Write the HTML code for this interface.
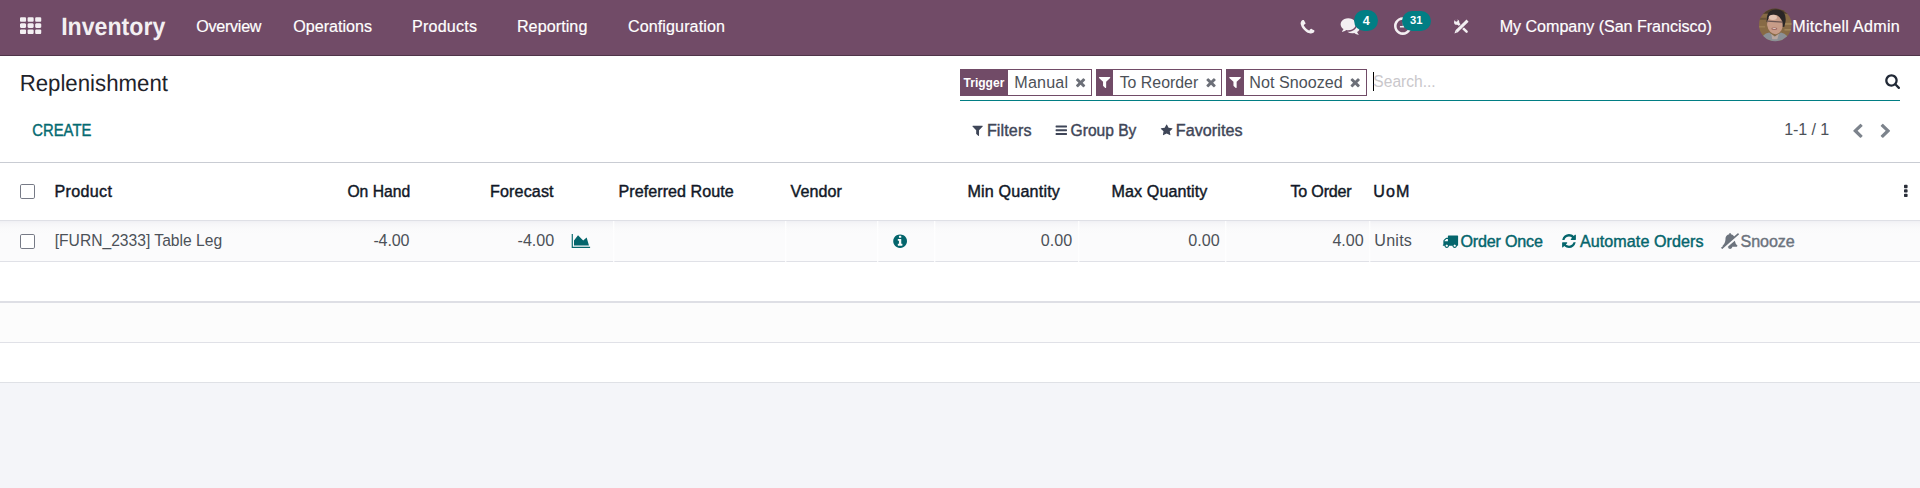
<!DOCTYPE html>
<html lang="en"><head><meta charset="utf-8"><title>Replenishment - Inventory</title>
<style>
html,body{margin:0;padding:0}
body{width:1920px;height:488px;position:relative;overflow:hidden;background:#f4f5f9;font-family:"Liberation Sans",Arial,sans-serif;}
.abs{position:absolute}
.t{position:absolute;white-space:nowrap;line-height:1;margin:0;padding:0;transform-origin:0 0}
.m{-webkit-text-stroke:0.42px currentColor}
.nv{-webkit-text-stroke:0.18px currentColor}
.g{text-rendering:geometricPrecision}
.b{font-weight:bold}
.ic{position:absolute;overflow:visible}
#nav{left:0;top:0;width:1920px;height:55px;background:#714b67;border-bottom:1px solid #4f3449}
#cp{left:0;top:56px;width:1920px;height:106px;background:#fff;border-bottom:1px solid #c9ccd3}
#thead{left:0;top:163px;width:1920px;height:57px;background:#fff}
#row1{left:0;top:220px;width:1920px;height:41px;background:linear-gradient(#dfe0e6 0,#dfe0e6 1px,#f0f0f4 1px,#f6f6f8 4px,#fafafb 9px,#fbfbfc 14px);border-bottom:1px solid #e0e1e7}
#row2{left:0;top:262px;width:1920px;height:39px;background:#fff;border-bottom:2px solid #dedfe5}
#row3{left:0;top:303px;width:1920px;height:39px;background:#fcfcfc;border-bottom:1px solid #e0e1e7}
#row4{left:0;top:343px;width:1920px;height:39px;background:#fff;border-bottom:1px solid #dfe1e6}
.vl{position:absolute;top:221px;height:41px;width:2px;background:linear-gradient(90deg,rgba(255,255,255,.85) 1px,rgba(255,255,255,.3) 1px)}
.cb{position:absolute;left:20px;width:13px;height:13px;border:1px solid #767a86;border-radius:1.8px;background:#fff}
.facet{position:absolute;top:69px;height:25px;border:1px solid #714b67;background:#fff}
.facet i{position:absolute;left:0;top:0;bottom:0;background:#714b67;display:block}
.badge{position:absolute;background:#017e84;border-radius:11px}
</style></head><body>
<nav class="o_main_navbar">
<div id="nav" class="abs"></div>
<svg class="ic" style="left:1758px;top:8px;width:35px;height:34px" viewBox="0 0 35 34"><defs><clipPath id="av"><circle cx="16" cy="16" r="16"/></clipPath><filter id="bl" x="-10%" y="-10%" width="120%" height="120%"><feGaussianBlur stdDeviation="0.7"/></filter></defs><g transform="translate(1.0,0.6) scale(1.01875)"><g clip-path="url(#av)"><rect width="32" height="32" fill="#876a45"/><g filter="url(#bl)"><rect x="-2" y="-2" width="36" height="7" fill="#4e3c2b"/><rect x="-2" y="9" width="9" height="2" fill="#6b5337"/><rect x="24" y="14" width="10" height="2" fill="#a08458"/><rect x="25" y="20" width="9" height="1.6" fill="#a08458"/><rect x="-2" y="17" width="8" height="1.6" fill="#9a7d52"/><path d="M7.5 13 Q7 1 17 1 Q27.5 1.5 26 13 L24.8 18 L9 15Z" fill="#2a2527"/><ellipse cx="15.6" cy="15.6" rx="7.6" ry="9.6" fill="#c79c88" transform="rotate(-8 15.6 15.6)"/><ellipse cx="13.6" cy="8.6" rx="4" ry="2.6" fill="#e2c3b3"/><path d="M8.3 11.6 L23.6 12.6 L23.5 13.8 L8.2 12.8Z" fill="#6a5552"/><ellipse cx="15" cy="19.8" rx="3" ry="1.3" fill="#a06a63"/><ellipse cx="15" cy="19.6" rx="1.8" ry="0.5" fill="#d9c9c2"/><path d="M1 33 Q3 24.5 10 23.5 L15.5 27.5 L21.5 23.5 Q29 25.5 30.5 33Z" fill="#8b9096"/><path d="M12 25 L15.5 27.6 L19.5 24.8 L18 30 L13 30Z" fill="#b9a79f"/></g></g></g></svg>
<svg class="ic" style="left:1453px;top:18px;width:17px;height:17px" viewBox="0 0 17 17"><g transform="translate(0.7,0.6) scale(0.96875)"><path d="M4.4 5 L13.3 13.5" stroke="#f3eff2" stroke-width="2.6" stroke-linecap="round" fill="none"/><circle cx="3.1" cy="3.7" r="2.7" fill="#f3eff2"/><circle cx="2.7" cy="1.8" r="1.35" fill="#714b67"/><path d="M3.4 12.7 L13.6 2.8" stroke="#714b67" stroke-width="4.8" fill="none"/><path d="M2.9 13.2 L14.3 2.1" stroke="#f3eff2" stroke-width="3" fill="none"/><path d="M0.8 15.3 L1.9 12.1 L4 14.2Z" fill="#f3eff2"/></g></svg>
<svg class="ic" style="left:19px;top:16px;width:24px;height:19px" viewBox="0 0 24 19"><path fill="#f3eff2" transform="translate(1.000,1.250) scale(0.011858,0.011896) translate(0.00,1408.00) scale(1,-1)" d="M512 288v-192q0 -40 -28 -68t-68 -28h-320q-40 0 -68 28t-28 68v192q0 40 28 68t68 28h320q40 0 68 -28t28 -68zM512 800v-192q0 -40 -28 -68t-68 -28h-320q-40 0 -68 28t-28 68v192q0 40 28 68t68 28h320q40 0 68 -28t28 -68zM1152 288v-192q0 -40 -28 -68t-68 -28h-320 q-40 0 -68 28t-28 68v192q0 40 28 68t68 28h320q40 0 68 -28t28 -68zM512 1312v-192q0 -40 -28 -68t-68 -28h-320q-40 0 -68 28t-28 68v192q0 40 28 68t68 28h320q40 0 68 -28t28 -68zM1152 800v-192q0 -40 -28 -68t-68 -28h-320q-40 0 -68 28t-28 68v192q0 40 28 68t68 28 h320q40 0 68 -28t28 -68zM1792 288v-192q0 -40 -28 -68t-68 -28h-320q-40 0 -68 28t-28 68v192q0 40 28 68t68 28h320q40 0 68 -28t28 -68zM1152 1312v-192q0 -40 -28 -68t-68 -28h-320q-40 0 -68 28t-28 68v192q0 40 28 68t68 28h320q40 0 68 -28t28 -68zM1792 800v-192 q0 -40 -28 -68t-68 -28h-320q-40 0 -68 28t-28 68v192q0 40 28 68t68 28h320q40 0 68 -28t28 -68zM1792 1312v-192q0 -40 -28 -68t-68 -28h-320q-40 0 -68 28t-28 68v192q0 40 28 68t68 28h320q40 0 68 -28t28 -68z"/></svg>
<svg class="ic" style="left:1299px;top:19px;width:17px;height:16px" viewBox="0 0 17 16"><path fill="#f3eff2" transform="translate(1.600,1.000) scale(0.009801,0.009659) translate(0.00,1408.00) scale(1,-1)" d="M1408 296q0 -27 -10 -70.5t-21 -68.5q-21 -50 -122 -106q-94 -51 -186 -51q-27 0 -53 3.5t-57.5 12.5t-47 14.5t-55.5 20.5t-49 18q-98 35 -175 83q-127 79 -264 216t-216 264q-48 77 -83 175q-3 9 -18 49t-20.5 55.5t-14.5 47t-12.5 57.5t-3.5 53q0 92 51 186 q56 101 106 122q25 11 68.5 21t70.5 10q14 0 21 -3q18 -6 53 -76q11 -19 30 -54t35 -63.5t31 -53.5q3 -4 17.5 -25t21.5 -35.5t7 -28.5q0 -20 -28.5 -50t-62 -55t-62 -53t-28.5 -46q0 -9 5 -22.5t8.5 -20.5t14 -24t11.5 -19q76 -137 174 -235t235 -174q2 -1 19 -11.5t24 -14 t20.5 -8.5t22.5 -5q18 0 46 28.5t53 62t55 62t50 28.5q14 0 28.5 -7t35.5 -21.5t25 -17.5q25 -15 53.5 -31t63.5 -35t54 -30q70 -35 76 -53q3 -7 3 -21z"/></svg>
<svg class="ic" style="left:1339px;top:17px;width:22px;height:19px" viewBox="0 0 22 19"><path fill="#f3eff2" transform="translate(1.600,1.300) scale(0.010826,0.011718) translate(0.00,1280.00) scale(1,-1)" d="M1408 768q0 -139 -94 -257t-256.5 -186.5t-353.5 -68.5q-86 0 -176 16q-124 -88 -278 -128q-36 -9 -86 -16h-3q-11 0 -20.5 8t-11.5 21q-1 3 -1 6.5t0.5 6.5t2 6l2.5 5t3.5 5.5t4 5t4.5 5t4 4.5q5 6 23 25t26 29.5t22.5 29t25 38.5t20.5 44q-124 72 -195 177t-71 224 q0 139 94 257t256.5 186.5t353.5 68.5t353.5 -68.5t256.5 -186.5t94 -257zM1792 512q0 -120 -71 -224.5t-195 -176.5q10 -24 20.5 -44t25 -38.5t22.5 -29t26 -29.5t23 -25q1 -1 4 -4.5t4.5 -5t4 -5t3.5 -5.5l2.5 -5t2 -6t0.5 -6.5t-1 -6.5q-3 -14 -13 -22t-22 -7 q-50 7 -86 16q-154 40 -278 128q-90 -16 -176 -16q-271 0 -472 132q58 -4 88 -4q161 0 309 45t264 129q125 92 192 212t67 254q0 77 -23 152q129 -71 204 -178t75 -230z"/></svg>
<svg class="ic" style="left:1393px;top:16px;width:20px;height:20px" viewBox="0 0 20 20"><path fill="#f3eff2" transform="translate(1.000,1.200) scale(0.011458,0.011523) translate(0.00,1408.00) scale(1,-1)" d="M896 992v-448q0 -14 -9 -23t-23 -9h-320q-14 0 -23 9t-9 23v64q0 14 9 23t23 9h224v352q0 14 9 23t23 9h64q14 0 23 -9t9 -23zM1312 640q0 148 -73 273t-198 198t-273 73t-273 -73t-198 -198t-73 -273t73 -273t198 -198t273 -73t273 73t198 198t73 273zM1536 640 q0 -209 -103 -385.5t-279.5 -279.5t-385.5 -103t-385.5 103t-279.5 279.5t-103 385.5t103 385.5t279.5 279.5t385.5 103t385.5 -103t279.5 -279.5t103 -385.5z"/></svg>
<div class="badge" style="left:1354px;top:10px;width:24px;height:21px"></div>
<div class="badge" style="left:1402px;top:10.5px;width:29px;height:20px"></div>
<span id="brand" class="t b g" style="left:61.00px;top:14.83px;font-size:25.00px;letter-spacing:0.000px;color:#f3eff2;transform:translateX(0.20px) scaleX(0.9246)">Inventory</span>
<span id="m1" class="t nv" style="left:196.26px;top:18.09px;font-size:16.12px;letter-spacing:-0.271px;color:#ffffff">Overview</span>
<span id="m2" class="t nv" style="left:293.26px;top:18.09px;font-size:16.12px;letter-spacing:-0.010px;color:#ffffff">Operations</span>
<span id="m3" class="t nv" style="left:412.10px;top:18.04px;font-size:16.12px;letter-spacing:0.182px;color:#ffffff">Products</span>
<span id="m4" class="t nv" style="left:516.88px;top:18.09px;font-size:16.12px;letter-spacing:0.080px;color:#ffffff">Reporting</span>
<span id="m5" class="t nv" style="left:627.90px;top:18.08px;font-size:16.12px;letter-spacing:0.102px;color:#ffffff">Configuration</span>
<span id="comp" class="t nv" style="left:1499.70px;top:18.11px;font-size:16.12px;letter-spacing:-0.037px;color:#ffffff">My Company (San Francisco)</span>
<span id="user" class="t nv" style="left:1792.23px;top:18.04px;font-size:16.12px;letter-spacing:0.285px;color:#ffffff">Mitchell Admin</span>
<span id="b1" class="t b" style="left:1362.87px;top:14.74px;font-size:12.50px;letter-spacing:0.000px;color:#ffffff">4</span>
<span id="b2" class="t b" style="left:1409.92px;top:15.05px;font-size:11.20px;letter-spacing:0.000px;color:#ffffff">31</span>
</nav>
<header class="o_control_panel">
<div id="cp" class="abs"></div>
<div class="facet" style="left:960px;width:130px"><i style="width:47px"></i></div>
<div class="facet" style="left:1096px;width:124px"><i style="width:16px"></i></div>
<div class="facet" style="left:1226px;width:139px"><i style="width:17px"></i></div>
<div class="abs" style="left:960px;top:100px;width:940px;height:1px;background:#017e84"></div>
<div class="abs" style="left:1373px;top:72px;width:1px;height:19px;background:#000"></div>
<svg class="ic" style="left:1075px;top:77px;width:12px;height:12px" viewBox="0 0 12 12"><path fill="#6c6f78" transform="translate(1.000,1.300) scale(0.007744,0.007492) translate(-110.00,1170.00) scale(1,-1)" d="M1298 214q0 -40 -28 -68l-136 -136q-28 -28 -68 -28t-68 28l-294 294l-294 -294q-28 -28 -68 -28t-68 28l-136 136q-28 28 -28 68t28 68l294 294l-294 294q-28 28 -28 68t28 68l136 136q28 28 68 28t68 -28l294 -294l294 294q28 28 68 28t68 -28l136 -136q28 -28 28 -68 t-28 -68l-294 -294l294 -294q28 -28 28 -68z"/></svg>
<svg class="ic" style="left:1205px;top:77px;width:12px;height:12px" viewBox="0 0 12 12"><path fill="#6c6f78" transform="translate(1.400,1.300) scale(0.007828,0.007492) translate(-110.00,1170.00) scale(1,-1)" d="M1298 214q0 -40 -28 -68l-136 -136q-28 -28 -68 -28t-68 28l-294 294l-294 -294q-28 -28 -68 -28t-68 28l-136 136q-28 28 -28 68t28 68l294 294l-294 294q-28 28 -28 68t28 68l136 136q28 28 68 28t68 -28l294 -294l294 294q28 28 68 28t68 -28l136 -136q28 -28 28 -68 t-28 -68l-294 -294l294 -294q28 -28 28 -68z"/></svg>
<svg class="ic" style="left:1349px;top:77px;width:12px;height:12px" viewBox="0 0 12 12"><path fill="#6c6f78" transform="translate(1.600,1.300) scale(0.007744,0.007492) translate(-110.00,1170.00) scale(1,-1)" d="M1298 214q0 -40 -28 -68l-136 -136q-28 -28 -68 -28t-68 28l-294 294l-294 -294q-28 -28 -68 -28t-68 28l-136 136q-28 28 -28 68t28 68l294 294l-294 294q-28 28 -28 68t28 68l136 136q28 28 68 28t68 -28l294 -294l294 294q28 28 68 28t68 -28l136 -136q28 -28 28 -68 t-28 -68l-294 -294l294 -294q28 -28 28 -68z"/></svg>
<svg class="ic" style="left:1097px;top:76px;width:15px;height:14px" viewBox="0 0 15 14"><path fill="#ffffff" transform="translate(1.900,1.100) scale(0.008085,0.007812) translate(1.02,1280.00) scale(1,-1)" d="M1403 1241q17 -41 -14 -70l-493 -493v-742q0 -42 -39 -59q-13 -5 -25 -5q-27 0 -45 19l-256 256q-19 19 -19 45v486l-493 493q-31 29 -14 70q17 39 59 39h1280q42 0 59 -39z"/></svg>
<svg class="ic" style="left:1228px;top:76px;width:14px;height:14px" viewBox="0 0 14 14"><path fill="#ffffff" transform="translate(1.200,1.100) scale(0.008298,0.007812) translate(1.02,1280.00) scale(1,-1)" d="M1403 1241q17 -41 -14 -70l-493 -493v-742q0 -42 -39 -59q-13 -5 -25 -5q-27 0 -45 19l-256 256q-19 19 -19 45v486l-493 493q-31 29 -14 70q17 39 59 39h1280q42 0 59 -39z"/></svg>
<svg class="ic" style="left:971px;top:124px;width:13px;height:13px" viewBox="0 0 13 13"><path fill="#3f4658" transform="translate(1.400,1.800) scale(0.007376,0.007244) translate(1.02,1280.00) scale(1,-1)" d="M1403 1241q17 -41 -14 -70l-493 -493v-742q0 -42 -39 -59q-13 -5 -25 -5q-27 0 -45 19l-256 256q-19 19 -19 45v486l-493 493q-31 29 -14 70q17 39 59 39h1280q42 0 59 -39z"/></svg>
<svg class="ic" style="left:1054px;top:124px;width:14px;height:12px" viewBox="0 0 14 12"><path fill="#3f4658" transform="translate(1.600,1.600) scale(0.007422,0.007344) translate(0.00,1280.00) scale(1,-1)" d="M1536 192v-128q0 -26 -19 -45t-45 -19h-1408q-26 0 -45 19t-19 45v128q0 26 19 45t45 19h1408q26 0 45 -19t19 -45zM1536 704v-128q0 -26 -19 -45t-45 -19h-1408q-26 0 -45 19t-19 45v128q0 26 19 45t45 19h1408q26 0 45 -19t19 -45zM1536 1216v-128q0 -26 -19 -45 t-45 -19h-1408q-26 0 -45 19t-19 45v128q0 26 19 45t45 19h1408q26 0 45 -19t19 -45z"/></svg>
<svg class="ic" style="left:1159px;top:123px;width:15px;height:14px" viewBox="0 0 15 14"><path fill="#3f4658" transform="translate(1.800,1.400) scale(0.007031,0.006805) translate(0.00,1504.00) scale(1,-1)" d="M1664 889q0 -22 -26 -48l-363 -354l86 -500q1 -7 1 -20q0 -21 -10.5 -35.5t-30.5 -14.5q-19 0 -40 12l-449 236l-449 -236q-22 -12 -40 -12q-21 0 -31.5 14.5t-10.5 35.5q0 6 2 20l86 500l-364 354q-25 27 -25 48q0 37 56 46l502 73l225 455q19 41 49 41t49 -41l225 -455 l502 -73q56 -9 56 -46z"/></svg>
<svg class="ic" style="left:1884px;top:73px;width:17px;height:17px" viewBox="0 0 17 17"><path fill="#212936" transform="translate(1.200,1.200) scale(0.008894,0.008894) translate(0.00,1408.00) scale(1,-1)" d="M1152 704q0 185 -131.5 316.5t-316.5 131.5t-316.5 -131.5t-131.5 -316.5t131.5 -316.5t316.5 -131.5t316.5 131.5t131.5 316.5zM1664 -128q0 -52 -38 -90t-90 -38q-54 0 -90 38l-343 342q-179 -124 -399 -124q-143 0 -273.5 55.5t-225 150t-150 225t-55.5 273.5 t55.5 273.5t150 225t225 150t273.5 55.5t273.5 -55.5t225 -150t150 -225t55.5 -273.5q0 -220 -124 -399l343 -343q37 -37 37 -90z"/></svg>
<svg class="ic" style="left:1852px;top:122px;width:12px;height:17px" viewBox="0 0 12 17"><path fill="#7c838c" transform="translate(1.200,1.800) scale(0.009073,0.008685) translate(-154.00,1510.00) scale(1,-1)" d="M1171 1235l-531 -531l531 -531q19 -19 19 -45t-19 -45l-166 -166q-19 -19 -45 -19t-45 19l-742 742q-19 19 -19 45t19 45l742 742q19 19 45 19t45 -19l166 -166q19 -19 19 -45t-19 -45z"/></svg>
<svg class="ic" style="left:1879px;top:122px;width:13px;height:17px" viewBox="0 0 13 17"><path fill="#7c838c" transform="translate(1.700,1.800) scale(0.009073,0.008685) translate(-90.00,1510.00) scale(1,-1)" d="M1107 659l-742 -742q-19 -19 -45 -19t-45 19l-166 166q-19 19 -19 45t19 45l531 531l-531 531q-19 19 -19 45t19 45l166 166q19 19 45 19t45 -19l742 -742q19 -19 19 -45t-19 -45z"/></svg>
<span id="title" class="t g" style="left:19.00px;top:71.58px;font-size:23.26px;letter-spacing:0.000px;color:#1f232b;transform:translateX(0.63px) scaleX(0.9563)">Replenishment</span>
<span id="create" class="t m" style="left:32.00px;top:122.07px;font-size:16.12px;letter-spacing:0.000px;color:#046a71;transform:translateX(0.36px) scaleX(0.9188)">CREATE</span>
<span id="f1l" class="t b" style="left:963.00px;top:77.48px;font-size:12.90px;letter-spacing:0.000px;color:#ffffff;transform:translateX(0.58px) scaleX(0.9327)">Trigger</span>
<span id="f1" class="t" style="left:1014.36px;top:74.10px;font-size:16.12px;letter-spacing:0.178px;color:#4c5158">Manual</span>
<span id="f2" class="t" style="left:1119.00px;top:74.06px;font-size:16.12px;letter-spacing:0.000px;color:#4c5158;transform:translateX(0.66px) scaleX(0.9854)">To Reorder</span>
<span id="f3" class="t" style="left:1249.36px;top:74.10px;font-size:16.12px;letter-spacing:0.018px;color:#4c5158">Not Snoozed</span>
<span id="srch" class="t" style="left:1373.00px;top:73.07px;font-size:16.12px;letter-spacing:0.000px;color:#c9c7cb;transform:translateX(0.34px) scaleX(0.9671)">Search...</span>
<span id="fl" class="t m" style="left:986.91px;top:122.04px;font-size:16.12px;letter-spacing:0.121px;color:#3f4658">Filters</span>
<span id="gb" class="t m" style="left:1070.00px;top:122.07px;font-size:16.12px;letter-spacing:0.000px;color:#3f4658;transform:translateX(0.59px) scaleX(0.9664)">Group By</span>
<span id="fav" class="t m" style="left:1175.74px;top:121.98px;font-size:16.12px;letter-spacing:0.075px;color:#3f4658">Favorites</span>
<span id="pg" class="t" style="left:1784.31px;top:121.10px;font-size:16.12px;letter-spacing:-0.132px;color:#4c5158">1-1 / 1</span>
</header>
<main class="o_list_view">
<div id="thead" class="abs"></div>
<div id="row1" class="abs"></div>
<div id="row2" class="abs"></div>
<div id="row3" class="abs"></div>
<div id="row4" class="abs"></div>
<div class="vl" style="left:613px"></div>
<div class="vl" style="left:785px"></div>
<div class="vl" style="left:877px"></div>
<div class="vl" style="left:934px"></div>
<div class="vl" style="left:1078px"></div>
<div class="vl" style="left:1225px"></div>
<div class="vl" style="left:1369px"></div>
<div class="cb" style="top:184px"></div><div class="cb" style="top:234px"></div>
<svg class="ic" style="left:570px;top:233px;width:22px;height:16px" viewBox="0 0 22 16"><path fill="#04656c" transform="translate(1.700,1.100) scale(0.008984,0.008984) translate(0.00,1408.00) scale(1,-1)" d="M2048 0v-128h-2048v1536h128v-1408h1920zM1664 1024l256 -896h-1664v576l448 576l576 -576z"/></svg>
<svg class="ic" style="left:892px;top:233px;width:16px;height:16px" viewBox="0 0 16 16"><path fill="#04656c" transform="translate(1.200,1.400) scale(0.008984,0.008789) translate(0.00,1408.00) scale(1,-1)" d="M1024 160v160q0 14 -9 23t-23 9h-96v512q0 14 -9 23t-23 9h-320q-14 0 -23 -9t-9 -23v-160q0 -14 9 -23t23 -9h96v-320h-96q-14 0 -23 -9t-9 -23v-160q0 -14 9 -23t23 -9h448q14 0 23 9t9 23zM896 1056v160q0 14 -9 23t-23 9h-192q-14 0 -23 -9t-9 -23v-160q0 -14 9 -23 t23 -9h192q14 0 23 9t9 23zM1536 640q0 -209 -103 -385.5t-279.5 -279.5t-385.5 -103t-385.5 103t-279.5 279.5t-103 385.5t103 385.5t279.5 279.5t385.5 103t385.5 -103t279.5 -279.5t103 -385.5z"/></svg>
<svg class="ic" style="left:1441px;top:234px;width:19px;height:15px" viewBox="0 0 19 15"><path fill="#04656c" transform="translate(1.800,1.500) scale(0.008854,0.008878) translate(-64.00,1280.00) scale(1,-1)" d="M640 128q0 52 -38 90t-90 38t-90 -38t-38 -90t38 -90t90 -38t90 38t38 90zM256 640h384v256h-158q-13 0 -22 -9l-195 -195q-9 -9 -9 -22v-30zM1536 128q0 52 -38 90t-90 38t-90 -38t-38 -90t38 -90t90 -38t90 38t38 90zM1792 1216v-1024q0 -15 -4 -26.5t-13.5 -18.5 t-16.5 -11.5t-23.5 -6t-22.5 -2t-25.5 0t-22.5 0.5q0 -106 -75 -181t-181 -75t-181 75t-75 181h-384q0 -106 -75 -181t-181 -75t-181 75t-75 181h-64q-3 0 -22.5 -0.5t-25.5 0t-22.5 2t-23.5 6t-16.5 11.5t-13.5 18.5t-4 26.5q0 26 19 45t45 19v320q0 8 -0.5 35t0 38 t2.5 34.5t6.5 37t14 30.5t22.5 30l198 198q19 19 50.5 32t58.5 13h160v192q0 26 19 45t45 19h1024q26 0 45 -19t19 -45z"/></svg>
<svg class="ic" style="left:1561px;top:233px;width:16px;height:16px" viewBox="0 0 16 16"><path fill="#04656c" transform="translate(1.100,1.100) scale(0.008984,0.009049) translate(0.00,1408.00) scale(1,-1)" d="M1511 480q0 -5 -1 -7q-64 -268 -268 -434.5t-478 -166.5q-146 0 -282.5 55t-243.5 157l-129 -129q-19 -19 -45 -19t-45 19t-19 45v448q0 26 19 45t45 19h448q26 0 45 -19t19 -45t-19 -45l-137 -137q71 -66 161 -102t187 -36q134 0 250 65t186 179q11 17 53 117 q8 23 30 23h192q13 0 22.5 -9.5t9.5 -22.5zM1536 1280v-448q0 -26 -19 -45t-45 -19h-448q-26 0 -45 19t-19 45t19 45l138 138q-148 137 -349 137q-134 0 -250 -65t-186 -179q-11 -17 -53 -117q-8 -23 -30 -23h-199q-13 0 -22.5 9.5t-9.5 22.5v7q65 268 270 434.5t480 166.5 q146 0 284 -55.5t245 -156.5l130 129q19 19 45 19t45 -19t19 -45z"/></svg>
<svg class="ic" style="left:1720px;top:232px;width:20px;height:18px" viewBox="0 0 20 18"><path fill="#6c737d" transform="translate(1.100,1.100) scale(0.008866,0.008873) translate(-14.47,1536.00) scale(1,-1)" d="M1558 684q61 -356 298 -556q0 -52 -38 -90t-90 -38h-448q0 -106 -75 -181t-181 -75t-180.5 74.5t-75.5 180.5zM1024 -176q16 0 16 16t-16 16q-59 0 -101.5 42.5t-42.5 101.5q0 16 -16 16t-16 -16q0 -73 51.5 -124.5t124.5 -51.5zM2026 1424q8 -10 7.5 -23.5t-10.5 -22.5 l-1872 -1622q-10 -8 -23.5 -7t-21.5 11l-84 96q-8 10 -7.5 23.5t10.5 21.5l186 161q-19 32 -19 66q50 42 91 88t85 119.5t74.5 158.5t50 206t19.5 260q0 152 117 282.5t307 158.5q-8 19 -8 39q0 40 28 68t68 28t68 -28t28 -68q0 -20 -8 -39q124 -18 219 -82.5t148 -157.5 l418 363q10 8 23.5 7t21.5 -11z"/></svg>
<svg class="ic" style="left:1903px;top:183px;width:6px;height:15px" viewBox="0 0 6 15"><path fill="#2b2f3a" transform="translate(1.000,1.800) scale(0.009375,0.008665) translate(0.00,1408.00) scale(1,-1)" d="M384 288v-192q0 -40 -28 -68t-68 -28h-192q-40 0 -68 28t-28 68v192q0 40 28 68t68 28h192q40 0 68 -28t28 -68zM384 800v-192q0 -40 -28 -68t-68 -28h-192q-40 0 -68 28t-28 68v192q0 40 28 68t68 28h192q40 0 68 -28t28 -68zM384 1312v-192q0 -40 -28 -68t-68 -28h-192 q-40 0 -68 28t-28 68v192q0 40 28 68t68 28h192q40 0 68 -28t28 -68z"/></svg>
<span id="h1" class="t m" style="left:54.48px;top:183.09px;font-size:16.12px;letter-spacing:0.320px;color:#111827">Product</span>
<span id="h2" class="t m" style="left:347.00px;top:183.06px;font-size:16.12px;letter-spacing:0.000px;color:#111827;transform:translateX(0.38px) scaleX(0.9729)">On Hand</span>
<span id="h3" class="t m" style="left:490.07px;top:183.08px;font-size:16.12px;letter-spacing:0.122px;color:#111827">Forecast</span>
<span id="h4" class="t m" style="left:618.59px;top:183.23px;font-size:16.12px;letter-spacing:0.034px;color:#111827">Preferred Route</span>
<span id="h5" class="t m" style="left:790.48px;top:183.07px;font-size:16.12px;letter-spacing:0.087px;color:#111827">Vendor</span>
<span id="h6" class="t m" style="left:967.48px;top:183.09px;font-size:16.12px;letter-spacing:0.177px;color:#111827">Min Quantity</span>
<span id="h7" class="t m" style="left:1111.59px;top:183.23px;font-size:16.12px;letter-spacing:0.075px;color:#111827">Max Quantity</span>
<span id="h8" class="t m" style="left:1290.39px;top:183.23px;font-size:16.12px;letter-spacing:-0.190px;color:#111827">To Order</span>
<span id="h9" class="t m" style="left:1373.31px;top:183.13px;font-size:16.12px;letter-spacing:1.049px;color:#111827">UoM</span>
<span id="r1" class="t" style="left:54.00px;top:232.04px;font-size:16.12px;letter-spacing:0.000px;color:#4c5158;transform:translateX(0.71px) scaleX(0.9703)">[FURN_2333] Table Leg</span>
<span id="r2" class="t" style="left:373.39px;top:232.10px;font-size:16.12px;letter-spacing:-0.128px;color:#4c5158">-4.00</span>
<span id="r3" class="t" style="left:517.57px;top:232.23px;font-size:16.12px;letter-spacing:-0.046px;color:#4c5158">-4.00</span>
<span id="r4" class="t" style="left:1040.75px;top:231.99px;font-size:16.12px;letter-spacing:0.061px;color:#4c5158">0.00</span>
<span id="r5" class="t" style="left:1188.34px;top:232.18px;font-size:16.12px;letter-spacing:-0.018px;color:#4c5158">0.00</span>
<span id="r6" class="t" style="left:1332.45px;top:232.22px;font-size:16.12px;letter-spacing:-0.029px;color:#4c5158">4.00</span>
<span id="r7" class="t" style="left:1374.31px;top:232.13px;font-size:16.12px;letter-spacing:0.230px;color:#4c5158">Units</span>
<span id="a1" class="t m" style="left:1460.44px;top:233.21px;font-size:16.12px;letter-spacing:-0.189px;color:#04656c">Order Once</span>
<span id="a2" class="t m" style="left:1579.97px;top:233.00px;font-size:16.12px;letter-spacing:0.060px;color:#04656c">Automate Orders</span>
<span id="a3" class="t m" style="left:1740.56px;top:233.08px;font-size:16.12px;letter-spacing:-0.093px;color:#6c737d">Snooze</span>
</main>
</body></html>
